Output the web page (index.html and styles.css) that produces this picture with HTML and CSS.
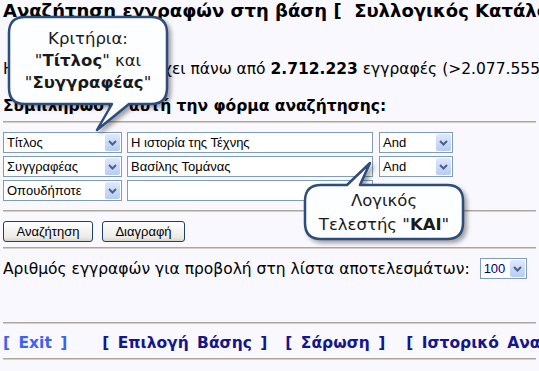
FILE: index.html
```html
<!DOCTYPE html>
<html lang="el">
<head>
    <meta charset="UTF-8">
    <title>Αναζήτηση εγγραφών</title>
    <link rel="stylesheet" href="styles.css">
</head>
<body>
    <h1 class="title">Αναζήτηση εγγραφών στη βάση [&nbsp;&nbsp;Συλλογικός Κατάλογος ]</h1>

    <p class="info">Η βάση δεδομένων έχει πάνω από <b>2.712.223</b> εγγραφές (&gt;2.077.555 τεκμήρια)</p>
    <p class="prompt">Συμπληρώστε αυτή την φόρμα αναζήτησης:</p>
    <div class="rule"></div>

    <div class="form-grid">
        <div class="select"><span>Τίτλος</span><i class="arrow"><svg width="15" height="15" viewBox="0 0 15 15"><path d="M4 6 L7.5 9.5 L11 6" fill="none" stroke="#4d6185" stroke-width="2"/></svg></i></div>
        <div class="field">Η ιστορία της Τέχνης</div>
        <div class="select"><span>And</span><i class="arrow"><svg width="15" height="15" viewBox="0 0 15 15"><path d="M4 6 L7.5 9.5 L11 6" fill="none" stroke="#4d6185" stroke-width="2"/></svg></i></div>

        <div class="select"><span>Συγγραφέας</span><i class="arrow"><svg width="15" height="15" viewBox="0 0 15 15"><path d="M4 6 L7.5 9.5 L11 6" fill="none" stroke="#4d6185" stroke-width="2"/></svg></i></div>
        <div class="field">Βασίλης Τομάνας</div>
        <div class="select"><span>And</span><i class="arrow"><svg width="15" height="15" viewBox="0 0 15 15"><path d="M4 6 L7.5 9.5 L11 6" fill="none" stroke="#4d6185" stroke-width="2"/></svg></i></div>

        <div class="select"><span>Οπουδήποτε</span><i class="arrow"><svg width="15" height="15" viewBox="0 0 15 15"><path d="M4 6 L7.5 9.5 L11 6" fill="none" stroke="#4d6185" stroke-width="2"/></svg></i></div>
        <div class="field"></div>
    </div>
    <div class="rule after-grid"></div>

    <div class="buttons">
        <button class="btn search">Αναζήτηση</button>
        <button class="btn clear">Διαγραφή</button>
    </div>
    <div class="rule"></div>

    <div class="count-row">
        <span>Αριθμός εγγραφών για προβολή στη λίστα αποτελεσμάτων:</span>
        <div class="select small"><span>100</span><i class="arrow"><svg width="15" height="15" viewBox="0 0 15 15"><path d="M4 6 L7.5 9.5 L11 6" fill="none" stroke="#4d6185" stroke-width="2"/></svg></i></div>
    </div>
    <div class="rule links-top"></div>

    <div class="links">
        <a class="exit">[ Exit ]</a>
        <a class="nav n1">[ Επιλογή Βάσης ]</a>
        <a class="nav n2">[ Σάρωση ]</a>
        <a class="nav n3">[ Ιστορικό Αναζητήσεων ]</a>
    </div>
    <div class="rule"></div>

    <!-- callouts over the form -->
    <div class="callout c1">
        <svg class="bubble" width="180" height="125" viewBox="-6 -6 180 125">
            <path d="M16 0 H142 Q158 0 158 16 V71 Q158 87 142 87 H120 L88 113 L103 87 H16 Q0 87 0 71 V16 Q0 0 16 0 Z"/>
        </svg>
        <div class="bubble-text">
            Κριτήρια:<br>
            "<b>Τίτλος</b>" και<br>
            "<b>Συγγραφέας</b>"
        </div>
    </div>

    <div class="callout c2">
        <svg class="bubble" width="180" height="90" viewBox="-6 -28 180 90">
            <path d="M16 0 H42 L65 -22 L55 0 H142 Q158 0 158 16 V38 Q158 54 142 54 H16 Q0 54 0 38 V16 Q0 0 16 0 Z"/>
        </svg>
        <div class="bubble-text">
            Λογικός<br>
            Τελεστής "<b>ΚΑΙ</b>"
        </div>
    </div>
</body>
</html>
```

FILE: styles.css
```css
body {
    margin: 0;
    padding: 0 3px;
    background: #f8f8fe;
    color: #000;
    font-family: 'DejaVu Sans', Verdana, sans-serif;
    font-size: 15.5px;
    position: relative;
    overflow: hidden;
    height: 371px;
}

.title {
    margin: 0;
    font-size: 18px;
    font-weight: bold;
    line-height: 22px;
    white-space: nowrap;
}

.info {
    margin: 38px 0 0 0;
    line-height: 19px;
    white-space: nowrap;
}

.prompt {
    margin: 18px 0 0 0;
    font-weight: bold;
    line-height: 19px;
    white-space: nowrap;
}

.rule {
    border-top: 1px solid #aca899;
    border-bottom: 1px solid #d4d0c4;
    margin-top: 5px;
}

.rule.after-grid {
    margin-top: 9px;
}

.form-grid {
    display: grid;
    grid-template-columns: 119px 246px 75px;
    column-gap: 5px;
    row-gap: 3px;
    margin-top: 9px;
    font-family: 'Liberation Sans', Arial, sans-serif;
    font-size: 13px;
}

.form-grid > :nth-child(3n) {
    margin-left: 1px;
}

.select,
.field {
    box-sizing: border-box;
    height: 21px;
    border: 1px solid #7f9db9;
    background: #fff;
    display: flex;
    align-items: center;
    padding-left: 3px;
    white-space: nowrap;
    overflow: hidden;
}

.select span {
    flex: 1;
}

.arrow {
    width: 15px;
    height: 17px;
    margin-right: 1px;
    border-radius: 2px;
    background: linear-gradient(#dfe9fd, #b7cbf7);
    display: flex;
    align-items: center;
    justify-content: center;
}

.buttons {
    display: flex;
    gap: 9px;
    margin-top: 9px;
    margin-bottom: 5px;
}

.btn {
    height: 21px;
    padding: 0;
    border: 1px solid #1e3e6e;
    border-radius: 3px;
    background: linear-gradient(#ffffff, #ecebe6 80%, #d8d4c8);
    font-family: 'Liberation Sans', Arial, sans-serif;
    font-size: 13px;
    color: #000;
}

.search { width: 90px; }
.clear { width: 83px; }

.count-row {
    display: flex;
    align-items: center;
    gap: 10px;
    margin-top: 9px;
    white-space: nowrap;
}

.select.small {
    width: 47px;
    height: 21px;
    font-family: 'Liberation Sans', Arial, sans-serif;
    font-size: 13px;
    color: #000080;
}

.links-top {
    margin-top: 43px;
}

.links {
    display: flex;
    font-weight: bold;
    white-space: nowrap;
    margin-top: 10px;
    margin-bottom: 6px;
    line-height: 18px;
}

.links a {
    color: #16168c;
    word-spacing: 3px;
}

.links .exit {
    color: #3c63f0;
}

.links .n1 { margin-left: 35px; }
.links .n2 { margin-left: 18px; }
.links .n3 { margin-left: 21px; }

/* callouts */
.callout {
    position: absolute;
}

.c1 {
    left: 9px;
    top: 17px;
    width: 158px;
    height: 87px;
}

.c2 {
    left: 305px;
    top: 185px;
    width: 158px;
    height: 54px;
}

.bubble {
    position: absolute;
    left: -6px;
    top: -6px;
    overflow: visible;
    filter: drop-shadow(3px 3px 2px rgba(0, 0, 0, 0.35));
}

.c2 .bubble {
    top: -28px;
}

.bubble path {
    fill: #fdfeff;
    stroke: #2d4d7c;
    stroke-width: 2.5;
    stroke-linejoin: round;
}

.bubble-text {
    position: relative;
    text-align: center;
    font-size: 16.5px;
    color: #1a1a1a;
}

.c1 .bubble-text {
    padding-top: 11px;
    line-height: 22px;
}

.c2 .bubble-text {
    padding-top: 4px;
    line-height: 24px;
}
```
